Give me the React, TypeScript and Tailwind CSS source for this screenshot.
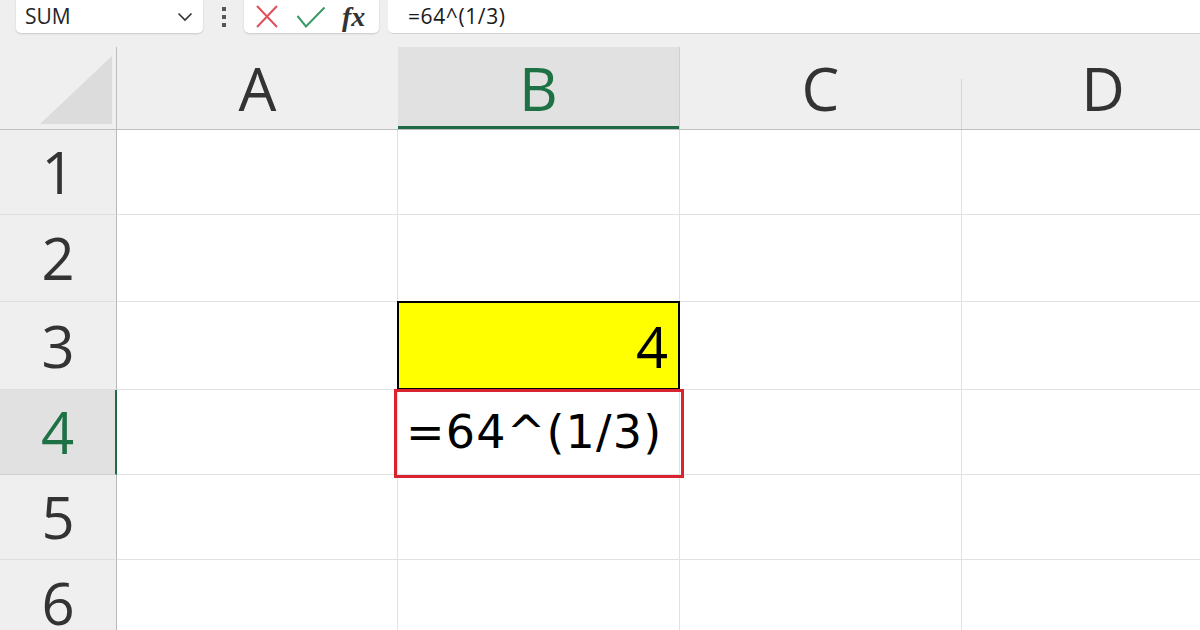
import type { ReactNode } from "react";

// Sheet geometry, in pixels.
const COLS = [
  { id: "A", w: 281 },
  { id: "B", w: 282 },
  { id: "C", w: 282 },
  { id: "D", w: 282 },
];
const ROWS = [
  { n: 1, h: 85 },
  { n: 2, h: 87 },
  { n: 3, h: 88 },
  { n: 4, h: 85 },
  { n: 5, h: 85 },
  { n: 6, h: 86 },
];
const ACTIVE_COL = "B";
const ACTIVE_ROW = 4;

const UI_FONT = "font-['Open_Sans','Noto_Sans',sans-serif]";

function FormulaBar() {
  return (
    <div className="flex h-[35px] items-start bg-[#efefef]">
      <div className="ml-[16px] flex h-[33px] w-[187px] items-center justify-between rounded-b-[5px] bg-white pl-[9px] pr-[10px] shadow-[0_1px_2px_rgba(0,0,0,0.16)]">
        <span className={`${UI_FONT} text-[21px] text-[#262626]`}>SUM</span>
        <svg width="16" height="10" viewBox="0 0 16 10" fill="none">
          <polyline points="1.5,1.5 8,8 14.5,1.5" stroke="#333" strokeWidth="1.6" />
        </svg>
      </div>
      {/* grip between name box and formula controls */}
      <div className="ml-[18px] flex h-[33px] w-[6px] flex-col items-center justify-center gap-[4px]">
        <span className="block h-[4px] w-[4px] bg-[#555]" />
        <span className="block h-[4px] w-[4px] bg-[#555]" />
        <span className="block h-[4px] w-[4px] bg-[#555]" />
      </div>
      <div className="ml-[17px] flex h-[33px] w-[135px] items-center rounded-b-[5px] bg-white pl-[11px] shadow-[0_1px_2px_rgba(0,0,0,0.16)]">
        <svg width="24" height="24" viewBox="0 0 24 24" fill="none">
          <path d="M2 1 L22 22 M22 1 L2 22" stroke="#e0505a" strokeWidth="2" />
        </svg>
        <svg className="ml-[17px]" width="30" height="22" viewBox="0 0 30 22" fill="none">
          <polyline points="1.5,10 10,20.5 28.5,1.5" stroke="#3a9a67" strokeWidth="2" />
        </svg>
        <span className="ml-[16px] font-['Liberation_Serif',serif] text-[28px] leading-none font-bold italic text-[#333]">fx</span>
      </div>
      <div className="ml-[9px] flex h-[34px] flex-1 items-center rounded-bl-[5px] border-b border-[#d2d2d2] bg-white pl-[20px]">
        <span className={`${UI_FONT} text-[21px] tracking-[0.6px] text-[#1a1a1a]`}>=64^(1/3)</span>
      </div>
    </div>
  );
}

function HeaderRow() {
  return (
    <div className="flex h-[83px] border-b border-[#bfbfbf]">
      <div className="flex w-[117px] shrink-0 items-end border-r border-[#bdbdbd] pb-[5px] pl-[40px]">
        <svg width="72" height="68" viewBox="0 0 72 68">
          <polygon points="72,0 72,68 0,68" fill="#dcdcdc" />
        </svg>
      </div>
      {COLS.map((c, i) => {
        const on = c.id === ACTIVE_COL;
        return (
          <div key={c.id} className="flex shrink-0" style={{ width: c.w }}>
            <div
              className={`flex flex-1 items-center justify-center ${UI_FONT} text-[60px] leading-none ${
                on ? "border-b-[3px] border-[#1e6b45] bg-[#e1e1e1] pt-[3px] text-[#1e7145]" : "text-[#333]"
              }`}
            >
              {c.id}
            </div>
            {i < COLS.length - 1 && !on && COLS[i + 1].id !== ACTIVE_COL && (
              <div className="h-[50px] w-px self-end bg-[#d6d6d6]" />
            )}
            {on && <div className="w-px bg-[#d0d0d0]" />}
          </div>
        );
      })}
      <div className="flex-1" />
    </div>
  );
}

function Cell({ row, col, w }: { row: number; col: string; w: number }) {
  let body: ReactNode = null;
  let cls = "border-r border-b border-[#e2e2e2] bg-white";
  if (col === "B" && row === 3) {
    cls = "border-2 border-black bg-[#ffff00] -mt-px -ml-px";
    body = (
      <span className="ml-auto pr-[10px] font-['Open_Sans',sans-serif] text-[56px] leading-none text-black">4</span>
    );
  }
  if (col === "B" && row === 4) {
    cls = "relative border-r border-b border-[#e2e2e2] bg-white";
    body = (
      <>
        <span className="pl-[8px] font-['DejaVu_Sans',sans-serif] text-[46px] leading-none tracking-[1.2px] text-black">
          =64^(1/3)
        </span>
        {/* selection outline drawn round the cell */}
        <span className="pointer-events-none absolute -left-[4px] -right-[5px] -top-[1px] -bottom-[4px] border-[3px] border-[#d9232e]" />
      </>
    );
  }
  return (
    <div className={`flex shrink-0 items-center ${cls}`} style={{ width: w + (col === "B" && row === 3 ? 1 : 0) }}>
      {body}
    </div>
  );
}

export default function App() {
  return (
    <div className="h-[630px] w-[1200px] overflow-hidden bg-[#efefef]">
      <FormulaBar />
      <div className="h-[12px]" />
      <HeaderRow />
      {ROWS.map((r) => {
        const on = r.n === ACTIVE_ROW;
        return (
          <div key={r.n} className="flex" style={{ height: r.h }}>
            <div
              className={`flex w-[117px] shrink-0 items-center justify-center border-b ${UI_FONT} text-[58px] leading-none ${
                on
                  ? "border-r-2 border-r-[#1e6b45] border-b-[#d0d0d0] bg-[#e1e1e1] text-[#1e7145]"
                  : "border-r border-r-[#b9b9b9] border-b-[#dedede] text-[#333]"
              }`}
            >
              {r.n}
            </div>
            {COLS.map((c) => (
              <Cell key={c.id} row={r.n} col={c.id} w={c.w} />
            ))}
            <div className="flex-1 border-b border-[#e2e2e2] bg-white" />
          </div>
        );
      })}
    </div>
  );
}
